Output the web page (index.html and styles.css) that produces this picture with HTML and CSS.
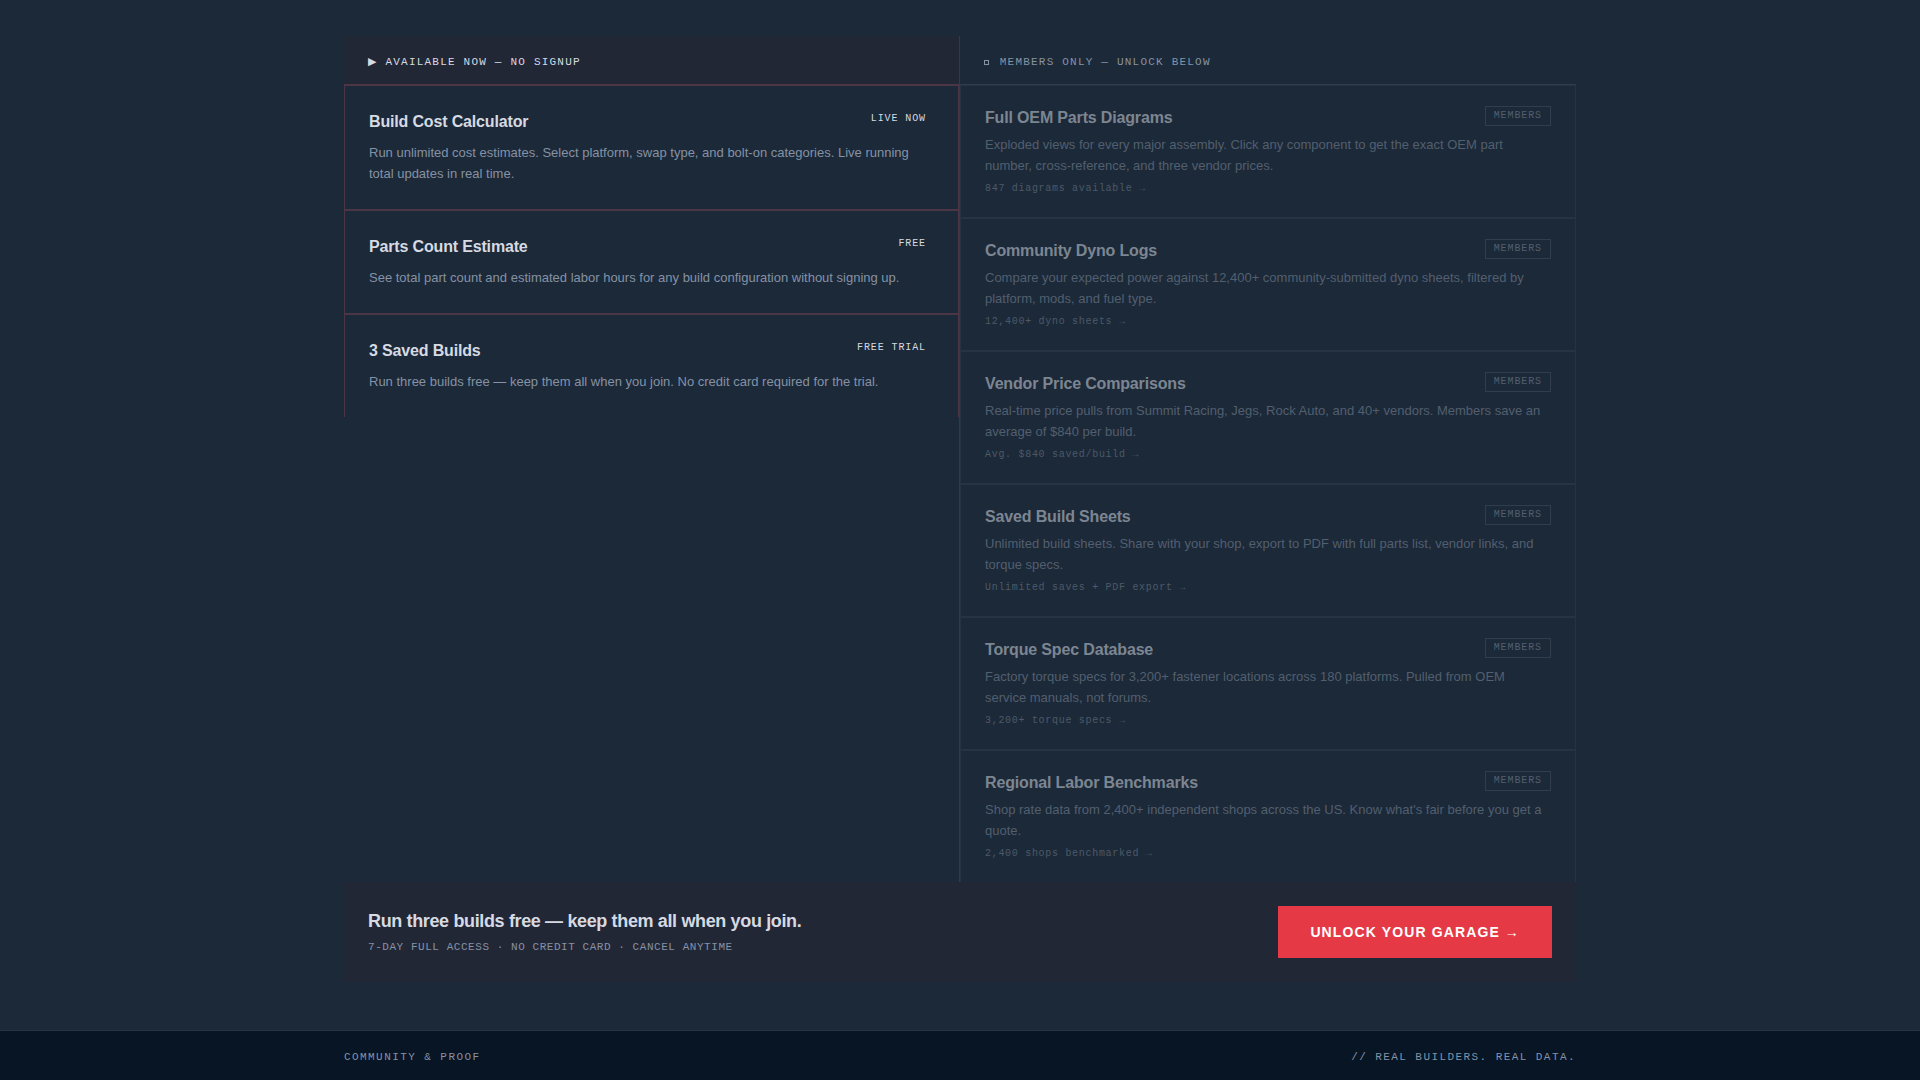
FILE: index.html
```html
<!DOCTYPE html>
<html lang="en">
<head>
<meta charset="utf-8">
<meta name="viewport" content="width=device-width, initial-scale=1">
<title>Unlock your garage</title>
<link rel="stylesheet" href="styles.css">
</head>
<body>
<main class="access">
  <div class="wrap">
    <div class="columns">
      <section class="column column-free">
        <h2 class="column-head"><span class="play">▶</span> Available now — no signup</h2>
        <article class="item">
          <div class="item-top"><h3 class="item-title">Build Cost Calculator</h3><span class="tag">Live now</span></div>
          <p class="item-text">Run unlimited cost estimates. Select platform, swap type, and bolt-on categories. Live running total updates in real time.</p>
        </article>
        <article class="item">
          <div class="item-top"><h3 class="item-title">Parts Count Estimate</h3><span class="tag">Free</span></div>
          <p class="item-text">See total part count and estimated labor hours for any build configuration without signing up.</p>
        </article>
        <article class="item">
          <div class="item-top"><h3 class="item-title">3 Saved Builds</h3><span class="tag">Free trial</span></div>
          <p class="item-text">Run three builds free — keep them all when you join. No credit card required for the trial.</p>
        </article>
      </section>
      <section class="column column-members">
        <h2 class="column-head"><span class="lock"></span> Members only — unlock below</h2>
        <article class="item">
          <div class="item-top"><h3 class="item-title">Full OEM Parts Diagrams</h3><span class="tag">Members</span></div>
          <p class="item-text">Exploded views for every major assembly. Click any component to get the exact OEM part number, cross-reference, and three vendor prices.</p>
          <p class="item-stat">847 diagrams available →</p>
        </article>
        <article class="item">
          <div class="item-top"><h3 class="item-title">Community Dyno Logs</h3><span class="tag">Members</span></div>
          <p class="item-text">Compare your expected power against 12,400+ community-submitted dyno sheets, filtered by platform, mods, and fuel type.</p>
          <p class="item-stat">12,400+ dyno sheets →</p>
        </article>
        <article class="item">
          <div class="item-top"><h3 class="item-title">Vendor Price Comparisons</h3><span class="tag">Members</span></div>
          <p class="item-text">Real-time price pulls from Summit Racing, Jegs, Rock Auto, and 40+ vendors. Members save an average of $840 per build.</p>
          <p class="item-stat">Avg. $840 saved/build →</p>
        </article>
        <article class="item">
          <div class="item-top"><h3 class="item-title">Saved Build Sheets</h3><span class="tag">Members</span></div>
          <p class="item-text">Unlimited build sheets. Share with your shop, export to PDF with full parts list, vendor links, and torque specs.</p>
          <p class="item-stat">Unlimited saves + PDF export →</p>
        </article>
        <article class="item">
          <div class="item-top"><h3 class="item-title">Torque Spec Database</h3><span class="tag">Members</span></div>
          <p class="item-text">Factory torque specs for 3,200+ fastener locations across 180 platforms. Pulled from OEM service manuals, not forums.</p>
          <p class="item-stat">3,200+ torque specs →</p>
        </article>
        <article class="item">
          <div class="item-top"><h3 class="item-title">Regional Labor Benchmarks</h3><span class="tag">Members</span></div>
          <p class="item-text">Shop rate data from 2,400+ independent shops across the US. Know what's fair before you get a quote.</p>
          <p class="item-stat">2,400 shops benchmarked →</p>
        </article>
      </section>
    </div>
    <div class="cta">
      <div class="cta-copy">
        <p class="cta-title">Run three builds free — keep them all when you join.</p>
        <p class="cta-note">7-day full access · No credit card · Cancel anytime</p>
      </div>
      <button class="cta-button" type="button">Unlock your garage →</button>
    </div>
  </div>
</main>
<div class="strip">
  <div class="wrap strip-row">
    <span>Community &amp; proof</span>
    <span>// Real builders. Real data.</span>
  </div>
</div>
</body>
</html>
```
FILE: styles.css
```css
* {
  box-sizing: border-box;
}

body {
  margin: 0;
  background: #1c2938;
  color: #d6dae2;
  font-family: "Liberation Sans", Arial, sans-serif;
}

h2,
h3,
p {
  margin: 0;
}

.access {
  padding: 36px 0 48px;
}

.wrap {
  max-width: 1280px;
  margin: 0 auto;
  padding: 0 24px;
}

.columns {
  display: grid;
  grid-template-columns: 1fr 1fr;
}

.column-free {
  border-right: 1px solid #2f3c4b;
}

.column-head {
  padding: 20px 24px 15px;
  font: 400 11px/13px "Liberation Mono", monospace;
  letter-spacing: 0.11em;
  text-transform: uppercase;
  border-bottom: 1px solid #2f3c4b;
}

.column-free .column-head {
  background: #222736;
  border-color: #4c3645;
}

.column-members .column-head {
  color: #8693a5;
}

.play {
  font-family: "DejaVu Sans", sans-serif;
  line-height: 1;
}

.lock {
  display: inline-block;
  width: 5px;
  height: 5px;
  margin-right: 3px;
  border: 1px solid #8693a5;
}

.item {
  padding: 24px 24px 25px;
  border: 1px solid #4c3645;
}

.item:last-child {
  border-bottom: 0;
}

.item-top {
  display: flex;
  justify-content: space-between;
  align-items: flex-start;
}

.item-title {
  font-size: 16px;
  line-height: 24px;
  letter-spacing: -0.01em;
}

.item-text {
  margin-top: 8px;
  font-size: 13px;
  line-height: 21px;
  color: #8592a5;
}

.tag {
  padding: 3px 8px;
  font: 400 10px/12px "Liberation Mono", monospace;
  letter-spacing: 0.09em;
  text-transform: uppercase;
}

.column-members .item {
  padding: 20px 24px 22px;
  border-color: #263342;
}

.column-members .item-title {
  color: #7c8692;
}

.column-members .item-text {
  margin-top: 4px;
  padding-right: 4px;
  color: #525f6f;
}

.column-members .tag {
  border: 1px solid #303d4c;
  color: #525f6f;
}

.item-stat {
  margin-top: 7px;
  font: 400 10px/12px "Liberation Mono", monospace;
  letter-spacing: 0.07em;
  color: #4c5968;
}

.cta {
  display: flex;
  justify-content: space-between;
  align-items: center;
  padding: 24px;
  background: #222736;
}

.cta-title {
  font-size: 18px;
  font-weight: 700;
  line-height: 24px;
  letter-spacing: -0.02em;
}

.cta-note {
  margin-top: 6px;
  font: 400 11px/16px "Liberation Mono", monospace;
  letter-spacing: 0.05em;
  text-transform: uppercase;
  color: #8592a5;
}

.cta-button {
  padding: 16px 32px;
  border: 0;
  background: #e63946;
  color: #fff;
  font: 700 14px/20px "Liberation Sans", Arial, sans-serif;
  letter-spacing: 0.08em;
  text-transform: uppercase;
}

.strip {
  border-top: 1px solid #263342;
  background: #071525;
}

.strip-row {
  display: flex;
  justify-content: space-between;
  padding-top: 20px;
  padding-bottom: 16px;
  font: 400 11px/13px "Liberation Mono", monospace;
  letter-spacing: 0.13em;
  text-transform: uppercase;
  color: #8592a5;
}
```
